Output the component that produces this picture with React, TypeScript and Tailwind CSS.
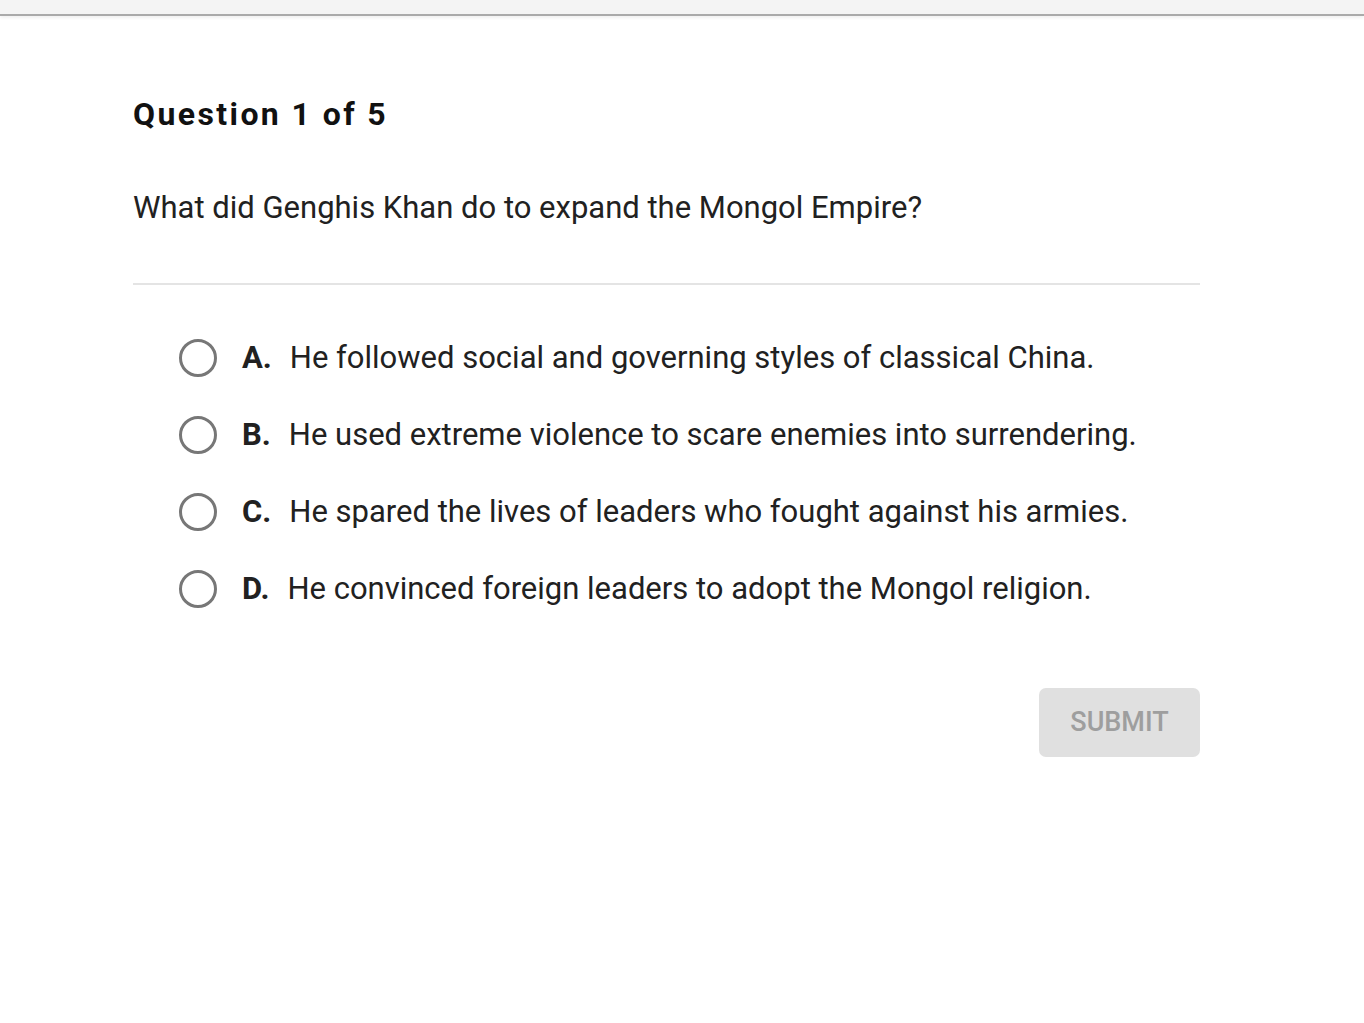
const options = [
  { key: "A", text: "He followed social and governing styles of classical China." },
  { key: "B", text: "He used extreme violence to scare enemies into surrendering." },
  { key: "C", text: "He spared the lives of leaders who fought against his armies." },
  { key: "D", text: "He convinced foreign leaders to adopt the Mongol religion." },
];

export default function App() {
  return (
    <div className="min-h-screen bg-white font-['Roboto',sans-serif] text-[#212121]">
      {/* top bar */}
      <div className="h-[16px] bg-[#f4f4f4] border-b-2 border-[#aaaaaa] shadow-[0_2px_3px_rgba(0,0,0,0.06)]" />

      <div className="pl-[133px] pr-[164px] pt-[78px]">
        <h1 className="text-[32px] font-bold tracking-[0.075em] leading-[40px] text-[#111]">
          Question 1 of 5
        </h1>

        <p className="mt-[54px] text-[31px] leading-[40px]">
          What did Genghis Khan do to expand the Mongol Empire?
        </p>

        <div className="mt-[55px] h-[2px] bg-[#e4e4e4]" />

        <div className="mt-[53px] pl-[46px] flex flex-col gap-[37px]">
          {options.map((o) => (
            <label key={o.key} className="flex items-center h-[40px] cursor-pointer">
              <span className="w-[38px] h-[38px] rounded-full border-[3px] border-[#777] shrink-0" />
              <span className="ml-[25px] mr-[18px] text-[31px] font-bold">{o.key}.</span>
              <span className="text-[31px]">{o.text}</span>
            </label>
          ))}
        </div>

        <div className="mt-[79px] flex justify-end">
          <button className="w-[161px] h-[69px] rounded-[7px] bg-[#e0e0e0] text-[27px] font-medium text-[#9e9e9e]">
            SUBMIT
          </button>
        </div>
      </div>
    </div>
  );
}
